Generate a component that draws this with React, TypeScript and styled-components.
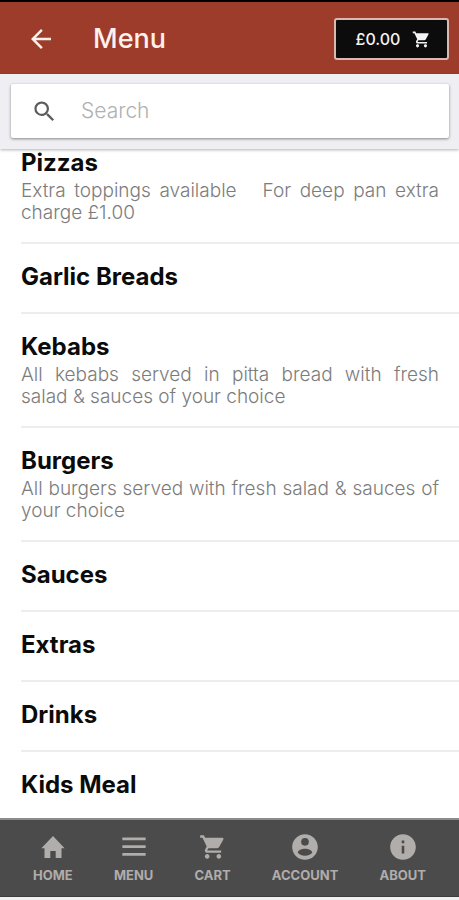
import React from "react";
import styled, { createGlobalStyle } from "styled-components";

const GlobalStyle = createGlobalStyle`
  *, *::before, *::after { box-sizing: border-box; }
  body {
    margin: 0;
    background: #ffffff;
    font-family: Inter, "Open Sans", sans-serif;
  }
`;

const Screen = styled.div`
  display: flex;
  flex-direction: column;
  height: 100vh;
  border-top: 2px solid #000000;
  border-bottom: 3px solid #efefef;
`;

const Header = styled.header`
  display: flex;
  align-items: center;
  flex: none;
  height: 72px;
  padding: 2px 10px 0 26px;
  background: #9e3c2c;
  color: #fdf1ec;
`;

const BackButton = styled.button`
  display: flex;
  margin: 0;
  padding: 0;
  border: 0;
  background: none;
  color: inherit;
  cursor: pointer;
`;

const Title = styled.h1`
  flex: 1;
  margin: 0 0 0 37px;
  font-size: 27px;
  line-height: 32px;
  font-weight: 500;
`;

const BasketButton = styled.button`
  display: flex;
  align-items: center;
  justify-content: center;
  gap: 12px;
  width: 115px;
  height: 42px;
  padding: 0 0 0 4px;
  border: 2px solid #dcb9b0;
  border-radius: 3px;
  background: #0c0c0c;
  color: #f4f4f4;
  font-family: inherit;
  font-size: 16px;
  font-weight: 500;
  cursor: pointer;
`;

const SearchBar = styled.div`
  position: relative;
  flex: none;
  padding: 10px 10px 11px 11px;
  background: #efeff3;
  box-shadow: 0 1px 3px rgba(0, 0, 0, 0.3);
`;

const SearchField = styled.label`
  display: flex;
  align-items: center;
  gap: 23px;
  height: 54px;
  padding: 0 20px;
  border-radius: 2px;
  background: #ffffff;
  color: #5c5c5c;
  box-shadow: 0 1px 3px rgba(0, 0, 0, 0.45);
`;

const SearchInput = styled.input`
  flex: 1;
  min-width: 0;
  padding: 0;
  border: 0;
  outline: 0;
  background: transparent;
  color: #333333;
  font-family: inherit;
  font-size: 21px;
  line-height: 26px;
  font-weight: 300;
  &::placeholder {
    color: #b0b0b0;
    opacity: 1;
  }
`;

const List = styled.ul`
  flex: 1;
  min-height: 0;
  margin: 0;
  padding: 1px 0 0 21px;
  overflow-y: auto;
  scrollbar-width: none;
  list-style: none;
`;

const Item = styled.li`
  min-height: 70px;
  padding: 20px 20px 18px 0;
  border-bottom: 2px solid #ededed;
  &:first-child {
    padding-top: 0;
  }
  &:last-child {
    border-bottom: 0;
  }
`;

const ItemName = styled.h2`
  margin: 0;
  color: #0b0b0b;
  font-size: 24px;
  line-height: 26px;
  font-weight: 700;
`;

const ItemNote = styled.p`
  margin: 4px 0 0;
  color: #7c7c7c;
  font-size: 19px;
  line-height: 22px;
  font-weight: 300;
  text-align: justify;
`;

const TabBar = styled.nav`
  display: flex;
  justify-content: space-between;
  flex: none;
  height: 79px;
  padding: 13px 33px 0;
  border-top: 2px solid #8c8c8c;
  border-bottom: 1px solid #3c3c3c;
  background: #4b4b4b;
`;

const Tab = styled.a`
  display: flex;
  flex-direction: column;
  align-items: center;
  gap: 6px;
  color: #b0adab;
  font-size: 13px;
  line-height: 16px;
  font-weight: 700;
  text-decoration: none;
`;

const paths = {
  back: "M20 11H7.83l5.59-5.59L12 4l-8 8 8 8 1.41-1.41L7.83 13H20v-2z",
  search:
    "M15.5 14h-.79l-.28-.27A6.471 6.471 0 0 0 16 9.5 6.5 6.5 0 1 0 9.5 16c1.61 0 3.09-.59 4.23-1.57l.27.28v.79l5 4.99L20.49 19l-4.99-5zm-6 0C7.01 14 5 11.99 5 9.5S7.01 5 9.5 5 14 7.01 14 9.5 11.99 14 9.5 14z",
  cart:
    "M7 18c-1.1 0-1.99.9-1.99 2S5.9 22 7 22s2-.9 2-2-.9-2-2-2zM1 2v2h2l3.6 7.59-1.35 2.45c-.16.28-.25.61-.25.96 0 1.1.9 2 2 2h12v-2H7.42c-.14 0-.25-.11-.25-.25l.03-.12.9-1.63h7.45c.75 0 1.41-.41 1.75-1.03l3.58-6.49A1.003 1.003 0 0 0 20 4H5.21l-.94-2H1zm16 16c-1.1 0-1.99.9-1.99 2s.89 2 1.99 2 2-.9 2-2-.9-2-2-2z",
  home: "M9.7 21.5v-6h4.6v6h5v-8.500H22L12 2.500 2 13h2.700v8.500z",
  menu: "M2 19.5h20v-2.3H2v2.3zm0-6.600h20v-2.300H2v2.300zm0-9v2.300h20V3.900H2z",
  account:
    "M12 1C5.93 1 1 5.93 1 12s4.93 11 11 11 11-4.93 11-11S18.07 1 12 1zm0 3.3a3.3 3.3 0 1 1 0 6.6 3.3 3.3 0 0 1 0-6.6zm0 15.100c-3 0-5.400-1.100-6.200-2.700.4-2.100 3.600-3.200 6.200-3.200s5.800 1.100 6.200 3.200c-.8 1.600-3.200 2.700-6.200 2.700z",
  info:
    "M12 1C5.93 1 1 5.93 1 12s4.93 11 11 11 11-4.93 11-11S18.07 1 12 1zm1.1 16.5h-2.2v-6.6h2.2v6.6zm0-8.8h-2.2V6.5h2.2v2.2z",
};

type IconName = keyof typeof paths;

function Icon({ name, size }: { name: IconName; size: number }) {
  return (
    <svg width={size} height={size} viewBox="0 0 24 24" fill="currentColor" aria-hidden="true">
      <path d={paths[name]} />
    </svg>
  );
}

const categories: { name: string; note?: string }[] = [
  { name: "Pizzas", note: "Extra toppings available \u00a0\u00a0For deep pan extra charge £1.00" },
  { name: "Garlic Breads" },
  { name: "Kebabs", note: "All kebabs served in pitta bread with fresh salad & sauces of your choice" },
  { name: "Burgers", note: "All burgers served with fresh salad & sauces of your choice" },
  { name: "Sauces" },
  { name: "Extras" },
  { name: "Drinks" },
  { name: "Kids Meal" },
];

const tabs: { icon: IconName; label: string }[] = [
  { icon: "home", label: "HOME" },
  { icon: "menu", label: "MENU" },
  { icon: "cart", label: "CART" },
  { icon: "account", label: "ACCOUNT" },
  { icon: "info", label: "ABOUT" },
];

export default function App() {
  return (
    <Screen>
      <GlobalStyle />
      <Header>
        <BackButton type="button" aria-label="Back">
          <Icon name="back" size={30} />
        </BackButton>
        <Title>Menu</Title>
        <BasketButton type="button">
          £0.00
          <Icon name="cart" size={19} />
        </BasketButton>
      </Header>
      <SearchBar>
        <SearchField>
          <Icon name="search" size={27} />
          <SearchInput type="search" placeholder="Search" aria-label="Search" />
        </SearchField>
      </SearchBar>
      <List>
        {categories.map(({ name, note }) => (
          <Item key={name}>
            <ItemName>{name}</ItemName>
            {note && <ItemNote>{note}</ItemNote>}
          </Item>
        ))}
      </List>
      <TabBar>
        {tabs.map(({ icon, label }) => (
          <Tab key={label} href={`#${label.toLowerCase()}`}>
            <Icon name={icon} size={28} />
            {label}
          </Tab>
        ))}
      </TabBar>
    </Screen>
  );
}
